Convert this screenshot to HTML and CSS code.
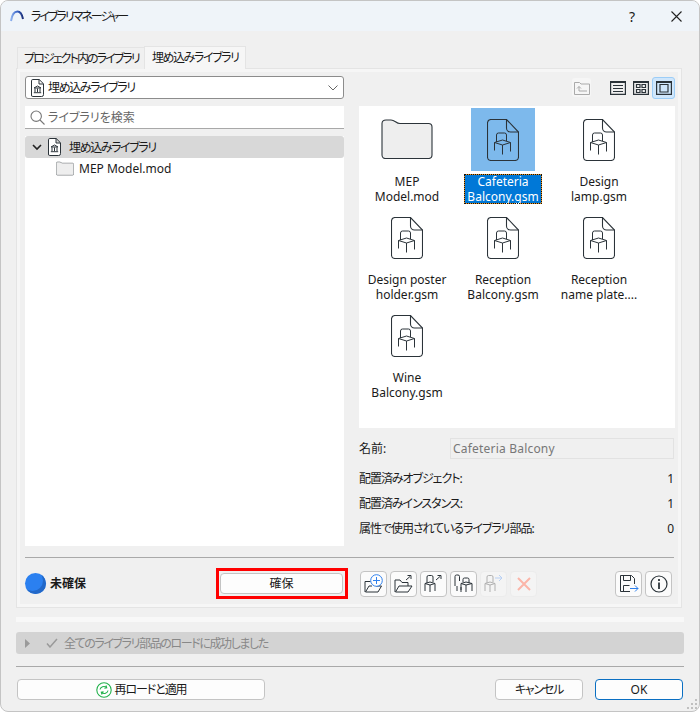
FILE: index.html
```html
<!DOCTYPE html>
<html lang="ja">
<head>
<meta charset="utf-8">
<title>ライブラリマネージャー</title>
<link rel="stylesheet" href="styles.css">
</head>
<body>
<svg class="defs" width="0" height="0" aria-hidden="true">
  <linearGradient id="arcg" x1="0" x2="1" y1="0" y2="0"><stop offset="0" stop-color="#8fb2ee"/><stop offset=".5" stop-color="#3a66c8"/><stop offset="1" stop-color="#1c2f78"/></linearGradient>
  <symbol id="chair" viewBox="0 0 18 24">
    <path d="M2.500 11V4A2 2 0 0 1 4.500 2h6a2 2 0 0 1 2 2v6M.5 11.500 8.500 9l8 2.500-8 2.500zM.5 11.500V19.500M16.500 11.500V20.500M8.500 14V23.500" fill="none" stroke="currentColor"/>
  </symbol>
  <symbol id="doc" viewBox="0 0 32 42">
    <path d="M4 .5h15.500L31.500 13v25a3.500 3.500 0 0 1-3.500 3.500H4A3.500 3.500 0 0 1 .5 38V4A3.500 3.500 0 0 1 4 .5z" fill="none" stroke="#2b3339" stroke-width="1.100"/>
    <path d="M19.500.500V9a4 4 0 0 0 4 4h8" fill="none" stroke="#2b3339" stroke-width="1.100"/>
  </symbol>
  <symbol id="libdoc" viewBox="0 0 13 18">
    <path d="M1.800.500h6.400l4.300 4.300v10.900a1.800 1.800 0 0 1-1.800 1.800H1.800A1.300 1.300 0 0 1 .5 16V1.800A1.300 1.300 0 0 1 1.800.500zM8 .5V5h4.500" fill="#fff" stroke="#2b3339"/>
    <path d="M3 9 6.500 7 10 9zM4 9.500v3.500M6.500 9.500v3.500M9 9.500v3.500M2.800 13.700h7.400" fill="none" stroke="#2b3339"/>
  </symbol>
  <symbol id="folder" viewBox="0 0 52 40">
    <path d="M1 4.500C1 2 2.500 1 5 1h5c4 0 5 3.500 9 3.500h28.500C50 4.500 51 6 51 8v28c0 2-1.200 3.500-3.500 3.500h-43C2.500 39.500 1 38 1 36z" fill="#eeeeee" stroke="#2b3339" stroke-width="1.100"/>
  </symbol>
</svg>
<div class="window">
  <header class="titlebar">
    <svg class="logo" width="16" height="14" viewBox="0 0 16 14"><path d="M2 12C3 5 5.500 2.500 8.500 2.500S13 5 14 10" fill="none" stroke="url(#arcg)" stroke-width="2"/></svg>
    <span class="title">ライブラリマネージャー</span>
    <span class="help">?</span>
    <svg class="close" width="11" height="11" viewBox="0 0 11 11"><path d="M.5.500l10 10M10.500.500l-10 10" stroke="#222" stroke-width="1.100"/></svg>
  </header>
  <main class="body">
    <div class="tabs">
      <div class="tab">プロジェクト内のライブラリ</div>
      <div class="tab active">埋め込みライブラリ</div>
    </div>
    <section class="panel">
      <div class="cols">
        <div class="left">
          <div class="select">
            <svg width="13" height="18"><use href="#libdoc"/></svg>
            <span class="grow">埋め込みライブラリ</span>
            <svg width="10" height="6" viewBox="0 0 10 6"><path d="M.5.500 5 5 9.500.500" fill="none" stroke="#666"/></svg>
          </div>
          <div class="search">
            <svg width="15" height="15" viewBox="0 0 15 15"><circle cx="6.200" cy="6.200" r="5.200" fill="none" stroke="#777" stroke-width="1.100"/><path d="M10 10l4.500 4.500" stroke="#777" stroke-width="1.100"/></svg>
            <span>ライブラリを検索</span>
          </div>
          <div class="tree">
            <div class="tree-row selected">
              <svg width="10" height="7" viewBox="0 0 10 7"><path d="M1 1l4 4 4-4" fill="none" stroke="#222" stroke-width="1.600"/></svg>
              <svg width="13" height="18"><use href="#libdoc"/></svg>
              <span>埋め込みライブラリ</span>
            </div>
            <div class="tree-row child">
              <svg width="18" height="15"><use href="#folder"/></svg>
              <span>MEP Model.mod</span>
            </div>
          </div>
        </div>
        <div class="right">
          <div class="viewbar">
            <span class="up">
              <svg width="16" height="14" viewBox="0 0 16 14"><path d="M.500 13.500V1.500h5l1.500 1.500h8.500v10.500zM5 10V5.500M3 7.500l2-2 2 2M5 10h8" fill="none" stroke="#aaa"/></svg>
            </span>
            <span class="view">
              <svg width="16" height="14" viewBox="0 0 16 14"><path d="M.600.600h14.800v12.800H.600zM3 4.500h10M3 7.500h10M3 10.500h10" fill="none" stroke="#2b3339" stroke-width="1.200"/><path d="M.6 1.200h14.800" stroke="#2b3339" stroke-width="1.500"/></svg>
            </span>
            <span class="view">
              <svg width="16" height="14" viewBox="0 0 16 14"><path d="M.600.600h14.800v12.800H.600zM3.500 3.500h3.500v3H3.500zM9 3.500h3.500v3H9zM3.500 8.500h3.500v3H3.500zM9 8.500h3.500v3H9z" fill="none" stroke="#2b3339" stroke-width="1.200"/><path d="M.6 1.200h14.800" stroke="#2b3339" stroke-width="1.500"/></svg>
            </span>
            <span class="view on">
              <svg width="16" height="14" viewBox="0 0 16 14"><path d="M.600.600h14.800v12.800H.600zM4 3.500h8v7.500H4z" fill="none" stroke="#2b3339" stroke-width="1.200"/><path d="M.6 1.200h14.800" stroke="#2b3339" stroke-width="1.500"/></svg>
            </span>
          </div>
          <div class="grid">
            <div class="item">
              <div class="tile"><svg class="foldericon" width="52" height="40"><use href="#folder"/></svg></div>
              <div class="label">MEP<br>Model.mod</div>
            </div>
            <div class="item sel">
              <div class="tile"><div class="docicon"><svg width="32" height="42"><use href="#doc"/></svg><svg class="ch" width="18" height="24"><use href="#chair"/></svg></div></div>
              <div class="label">Cafeteria<br>Balcony.gsm</div>
            </div>
            <div class="item">
              <div class="tile"><div class="docicon"><svg width="32" height="42"><use href="#doc"/></svg><svg class="ch" width="18" height="24"><use href="#chair"/></svg></div></div>
              <div class="label">Design<br>lamp.gsm</div>
            </div>
            <div class="item">
              <div class="tile"><div class="docicon"><svg width="32" height="42"><use href="#doc"/></svg><svg class="ch" width="18" height="24"><use href="#chair"/></svg></div></div>
              <div class="label">Design poster<br>holder.gsm</div>
            </div>
            <div class="item">
              <div class="tile"><div class="docicon"><svg width="32" height="42"><use href="#doc"/></svg><svg class="ch" width="18" height="24"><use href="#chair"/></svg></div></div>
              <div class="label">Reception<br>Balcony.gsm</div>
            </div>
            <div class="item">
              <div class="tile"><div class="docicon"><svg width="32" height="42"><use href="#doc"/></svg><svg class="ch" width="18" height="24"><use href="#chair"/></svg></div></div>
              <div class="label">Reception<br>name plate....</div>
            </div>
            <div class="item">
              <div class="tile"><div class="docicon"><svg width="32" height="42"><use href="#doc"/></svg><svg class="ch" width="18" height="24"><use href="#chair"/></svg></div></div>
              <div class="label">Wine<br>Balcony.gsm</div>
            </div>
          </div>
          <div class="namerow">
            <span class="namelabel">名前:</span>
            <div class="nameinput">Cafeteria Balcony</div>
          </div>
          <div class="stat"><span>配置済みオブジェクト:</span><span>1</span></div>
          <div class="stat"><span>配置済みインスタンス:</span><span>1</span></div>
          <div class="stat"><span>属性で使用されているライブラリ部品:</span><span>0</span></div>
        </div>
      </div>
      <hr class="sep">
      <div class="footer">
        <span class="dot"></span>
        <b class="status">未確保</b>
        <div class="redbox"><button class="btn secure">確保</button></div>
        <div class="tools">
          <span class="tool"><svg width="20" height="19" viewBox="0 0 20 19"><path d="M1 18V7.500h5.500M1.500 18H14l3.500-6H12M1.500 18 5 12h3" fill="none" stroke="#2b3339"/><circle cx="12.500" cy="6.500" r="5.800" fill="#fff" stroke="#2f80ed"/><path d="M12.500 3v7M9 6.500h7" stroke="#2f80ed"/></svg></span>
          <span class="tool"><svg width="20" height="19" viewBox="0 0 20 19"><path d="M1 18V6h5l2 2.500h6V12M1.500 18H14l4-6H5l-3.500 6" fill="none" stroke="#2b3339"/><path d="M12 6l4-3.500M13.500 1.500h3.500V5" fill="none" stroke="#2b3339"/></svg></span>
          <span class="tool"><svg width="20" height="19" viewBox="0 0 20 19"><path d="M3 9V3a1.500 1.500 0 0 1 1.500-1.500h3A1.500 1.500 0 0 1 9 3v5M1 9.500 6 8l5 1.500L6 11zM1 9.500V17M11 9.500V17M6 11v7M12 6l4-3.500M13.500 1.500h3.500V5" fill="none" stroke="#2b3339"/></svg></span>
          <span class="tool"><svg width="20" height="19" viewBox="0 0 20 19"><path d="M1 12V2.500A1.500 1.500 0 0 1 2.500 1H4a1.500 1.500 0 0 1 1.500 1.500V7M3 12v5M7 13v5M9 8V5.500A1.500 1.500 0 0 1 10.500 4h3A1.500 1.500 0 0 1 15 5.500V9M7 9.500 12 8l6 1.500-6 1.500zM7 9.500V16M18 9.500V17M12 11v7" fill="none" stroke="#2b3339"/></svg></span>
          <span class="tool off"><svg width="20" height="19" viewBox="0 0 20 19"><path d="M3 9V3a1.500 1.500 0 0 1 1.500-1.500h3A1.500 1.500 0 0 1 9 3v5M1 9.500 6 8l5 1.500L6 11zM1 9.500V17M11 9.500V17M6 11v7" fill="none" stroke="#b0b0b0"/><path d="M11 4h7M15 1l3 3-3 3" fill="none" stroke="#b8d0f4"/></svg></span>
          <span class="tool off"><svg width="14" height="14" viewBox="0 0 14 14"><path d="M1 1l12 12M13 1 1 13" stroke="#fbb5a8" stroke-width="2"/></svg></span>
        </div>
        <div class="tools end">
          <span class="tool"><svg width="20" height="19" viewBox="0 0 20 19"><path d="M11 17.500H1.500V1.500h11l3 3V10M4.500 1.500v5h7v-5M4.500 17.500v-6h6" fill="none" stroke="#2b3339"/><path d="M11 14.500h8M16 11.500l3 3-3 3" fill="none" stroke="#2f80ed"/></svg></span>
          <span class="tool"><svg width="18" height="18" viewBox="0 0 18 18"><circle cx="9" cy="9" r="8" fill="none" stroke="#2b3339" stroke-width="1.200"/><path d="M9 7.500V14M9 4v2" stroke="#2b3339" stroke-width="1.800"/></svg></span>
        </div>
      </div>
    </section>
    <div class="strip"></div>
    <div class="statusbar">
      <svg width="6" height="9" viewBox="0 0 6 9"><path d="M0 0l5 4.500L0 9z" fill="#9a9a9a"/></svg>
      <svg width="12" height="10" viewBox="0 0 12 10"><path d="M1 5.500 4 9l7-8" fill="none" stroke="#9a9a9a" stroke-width="1.500"/></svg>
      <span>全てのライブラリ部品のロードに成功しました</span>
    </div>
    <hr class="sep bottom">
    <div class="actions">
      <button class="btn reload">
        <svg width="16" height="16" viewBox="0 0 16 16"><circle cx="8" cy="8" r="7.200" fill="#fff" stroke="#22b14c" stroke-width="1.100"/><path d="M4 7.500C4.500 5 8 3.500 10.500 5.500M12 8.500C11.500 11 8 12.500 5.500 10.500M10 3.500l.7 2.300-2.300.4M6 12.500l-.7-2.300 2.300-.4" fill="none" stroke="#22b14c" stroke-width="1.100"/></svg>
        <span class="reload-text">再ロードと適用</span>
      </button>
      <span class="grow"></span>
      <button class="btn cancel">キャンセル</button>
      <button class="btn ok">OK</button>
    </div>
  </main>
  <svg class="grip" width="10" height="10" viewBox="0 0 10 10"><path d="M8 0h2v2H8zM4 4h2v2H4zM8 4h2v2H8zM0 8h2v2H0zM4 8h2v2H4zM8 8h2v2H8z" fill="#c0c0c0"/></svg>
</div>
</body>
</html>
```

FILE: styles.css
```css
* { box-sizing: border-box; }
html, body { margin: 0; padding: 0; background: #fff; }
body { font: 12px/15px "Noto Sans", "Noto Sans CJK JP", sans-serif; font-feature-settings: "palt"; color: #1a1a1a; }
svg { display: block; flex: none; }
.defs { position: absolute; }
.grow { flex: 1; }

.window { position: relative; width: 700px; height: 712px; background: #f0f0f0; border: 1px solid #c4c4c4; border-radius: 8px; overflow: hidden; }
.grip { position: absolute; right: 2px; bottom: 2px; }
.titlebar { height: 30px; background: #eff4f9; display: flex; align-items: center; padding-left: 8px; }
.title { margin-left: 6px; flex: 1; letter-spacing: -2px; }
.help { width: 12px; margin-right: 33px; font-size: 14px; text-align: center; }
.close { margin-right: 17px; }

.body { padding: 15px 15px 0 15px; }
.tabs { display: flex; height: 23px; align-items: flex-end; padding-left: 1px; position: relative; z-index: 1; }
.tab { height: 22px; padding: 3px 5px 0 6px; background: #f0f0f0; border: 1px solid #e4e4e4; border-bottom: 0; white-space: nowrap; letter-spacing: -1.9px; }
.tab.active { height: 23px; padding: 3px 6px 0 7px; background: #f6f6f6; margin-left: -1px; letter-spacing: -1.4px; }

.panel { height: 540px; width: 666px; background: #f0f0f0; border: 1px solid #e4e4e4; box-shadow: inset 0 0 0 3px #f6f6f6; padding: 7px 8px 0 8px; margin-top: -1px; }
.cols { display: grid; grid-template-columns: 319px 316px; column-gap: 15px; height: 470px; }
.left { display: flex; flex-direction: column; }
.select { height: 23px; background: #fff; border: 1px solid #8c8c8c; border-radius: 3px; display: flex; align-items: center; gap: 4px; padding: 0 5px; }
.select .grow { letter-spacing: -1.4px; }
.search { height: 23px; margin-top: 7px; background: #fff; border-bottom: 1px solid #a8a8a8; display: flex; align-items: center; gap: 3px; padding-left: 5px; color: #666; }
.tree { flex: 1; margin-top: 7px; background: #fff; }
.tree-row { height: 22px; display: flex; align-items: center; }
.tree-row.selected { background: #d8d8d8; border-radius: 3px; padding-left: 7px; gap: 6px; }
.tree-row.selected span { margin-left: 2px; letter-spacing: -1.4px; }
.tree-row.child { padding-left: 31px; gap: 5px; padding-bottom: 2px; }

.right { display: flex; flex-direction: column; }
.viewbar { height: 23px; display: flex; align-items: center; justify-content: flex-end; margin-bottom: 7px; }
.up { width: 19px; height: 19px; background: #f6f6f6; border-radius: 3px; display: flex; align-items: center; justify-content: center; margin-right: 15px; }
.view { width: 23px; height: 22px; display: flex; align-items: center; justify-content: center; border: 1px solid transparent; border-radius: 3px; }
.view.on { background: #cfe6fb; border-color: #9ccdf7; }
.grid { height: 322px; background: #fff; display: grid; grid-template-columns: repeat(3, 96px); grid-auto-rows: 98px; align-content: start; }
.item { display: flex; flex-direction: column; align-items: center; padding-top: 2px; }
.tile { width: 64px; height: 64px; display: flex; align-items: center; justify-content: center; }
.foldericon { margin-top: -1px; }
.docicon { position: relative; width: 32px; height: 42px; }
.ch { position: absolute; left: 7px; top: 12px; color: #2b3339; }
.label { margin-top: 3px; text-align: center; white-space: nowrap; padding: 0 2px; line-height: 15px; }
.item.sel .tile { background: #7db9ec; }
.item.sel .label { padding: 0 3px; background: #0078d7; color: #fff; box-shadow: inset 0 0 0 1px #e8901a; outline: 1px dotted #111; outline-offset: -1px; }
.namerow { display: flex; align-items: center; margin-top: 10px; height: 21px; }
.namelabel { width: 91px; }
.nameinput { width: 224px; height: 21px; border: 1px solid #e2e2e2; color: #777; padding: 2px; background: #f0f0f0; letter-spacing: .2px; }
.stat { display: flex; justify-content: space-between; height: 25px; padding-right: 1px; align-items: center; }
.stat span:first-child { letter-spacing: -1.05px; }
.namerow + .stat { margin-top: 7px; }

.sep { border: 0; height: 1px; background: #a9a9a9; margin: 11px 0 0 0; width: 649px; }
.footer { display: flex; align-items: center; height: 31px; margin-top: 10px; }
.dot { width: 21px; height: 21px; border-radius: 50%; background: #2b80f0; box-shadow: inset -3px -3px 0 #2268c8; }
.status { margin-left: 4px; width: 166px; font-weight: 700; }
.redbox { width: 132px; height: 31px; border: 3px solid #f00; padding: 2px 2px 2px 1px; margin-right: 12px; }
.btn { font: inherit; font-feature-settings: inherit; color: inherit; background: #fdfdfd; border: 1px solid #c4c4c4; border-radius: 4px; padding: 0; }
.secure { width: 100%; height: 100%; display: block; }
.tools { display: flex; gap: 3px; }
.tools.end { margin-left: auto; margin-right: 1px; }
.tool { width: 27px; height: 26px; background: #fbfbfb; border: 1px solid #c4c4c4; border-radius: 4px; display: flex; align-items: center; justify-content: center; }
.tool.off { background: #f4f4f4; border-color: #ececec; }

.strip { height: 5px; width: 668px; background: #f8f8f8; margin-top: 9px; }
.statusbar { width: 668px; height: 22px; margin-top: 10px; background: #d3d3d3; border-radius: 3px; display: flex; align-items: center; padding-left: 9px; color: #888; }
.statusbar svg + svg { margin-left: 15px; }
.statusbar span { margin-left: 6px; letter-spacing: -1.4px; }
.sep.bottom { width: 668px; margin-top: 12px; }
.actions { display: flex; width: 667px; height: 21px; margin-top: 12px; padding-left: 1px; }
.reload { width: 248px; display: flex; align-items: center; justify-content: center; gap: 3px; }
.reload-text { letter-spacing: -1.1px; }
.cancel { width: 88px; margin-right: 12px; letter-spacing: -1.2px; }
.ok { width: 88px; border-color: #0a6fc2; }
```
